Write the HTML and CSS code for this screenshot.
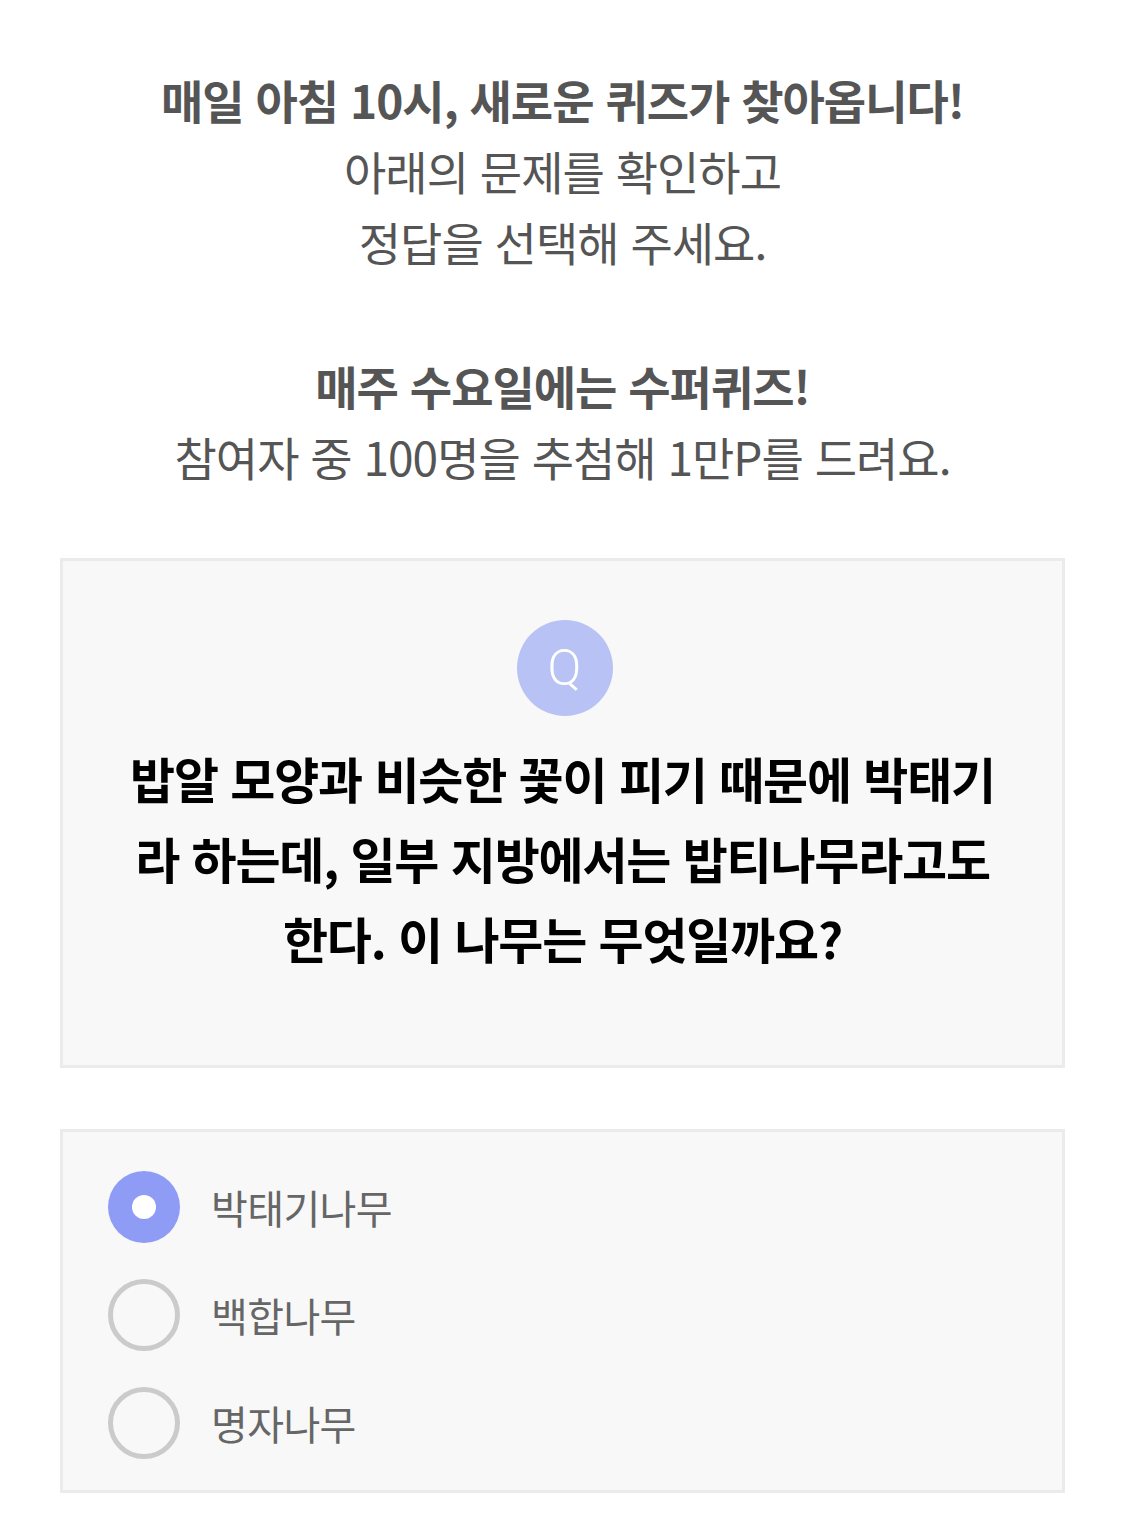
FILE: index.html
```html
<!DOCTYPE html>
<html lang="ko">
<head>
    <meta charset="UTF-8">
    <meta name="viewport" content="width=device-width, initial-scale=1.0">
    <title>오늘의 퀴즈</title>
    <link rel="stylesheet" href="styles.css">
</head>
<body>
    <div class="intro">
        <p><strong>매일 아침 10시, 새로운 퀴즈가 찾아옵니다!</strong></p>
        <p>아래의 문제를 확인하고</p>
        <p>정답을 선택해 주세요.</p>
        <p class="blank"></p>
        <p><strong>매주 수요일에는 수퍼퀴즈!</strong></p>
        <p>참여자 중 100명을 추첨해 1만P를 드려요.</p>
    </div>

    <div class="question">
        <div class="q-badge">Q</div>
        <p class="q-text">밥알 모양과 비슷한 꽃이 피기 때문에 박태기<br>라 하는데, 일부 지방에서는 밥티나무라고도<br>한다. 이 나무는 무엇일까요?</p>
    </div>

    <ul class="options">
        <li class="option checked"><span class="radio"></span><span class="label">박태기나무</span></li>
        <li class="option"><span class="radio"></span><span class="label">백합나무</span></li>
        <li class="option"><span class="radio"></span><span class="label">명자나무</span></li>
    </ul>
</body>
</html>
```

FILE: styles.css
```css
* {
    margin: 0;
    padding: 0;
    box-sizing: border-box;
}
body {
    background: #fff;
    font-family: "Noto Sans CJK KR", "Noto Sans", sans-serif;
    padding: 64px 60px 20px;
}
.intro {
    text-align: center;
    color: #555;
    font-size: 46px;
    line-height: 71px;
    letter-spacing: -1px;
    margin-bottom: 66px;
}
.intro strong {
    font-weight: 700;
}
.intro .blank {
    height: 73px;
}
.question {
    background: #f8f8f8;
    border: 3px solid #ebebeb;
    padding: 59px 20px 87px;
    display: flex;
    flex-direction: column;
    align-items: center;
}
.q-badge {
    width: 96px;
    height: 96px;
    margin-left: 4px;
    border-radius: 50%;
    background: #b8c2f4;
    color: #fff;
    font-family: Roboto, "Noto Sans", sans-serif;
    font-weight: 300;
    font-size: 50px;
    display: flex;
    align-items: center;
    justify-content: center;
}
.q-text {
    margin-top: 22px;
    text-align: center;
    color: #000;
    font-size: 49px;
    font-weight: 700;
    line-height: 80px;
    letter-spacing: -1.2px;
}
.options {
    list-style: none;
    margin-top: 61px;
    background: #f8f8f8;
    border: 3px solid #ebebeb;
    padding: 21px 45px 13px;
}
.option {
    height: 108px;
    display: flex;
    align-items: center;
    gap: 31px;
}
.radio {
    width: 72px;
    height: 72px;
    border-radius: 50%;
    border: 5px solid #cbcbcb;
    display: flex;
    align-items: center;
    justify-content: center;
}
.option.checked .radio {
    border: none;
    background: #8f9cf5;
}
.option.checked .radio::after {
    content: "";
    width: 24px;
    height: 24px;
    border-radius: 50%;
    background: #fff;
}
.label {
    font-size: 40px;
    color: #666;
    letter-spacing: -0.6px;
}
```
